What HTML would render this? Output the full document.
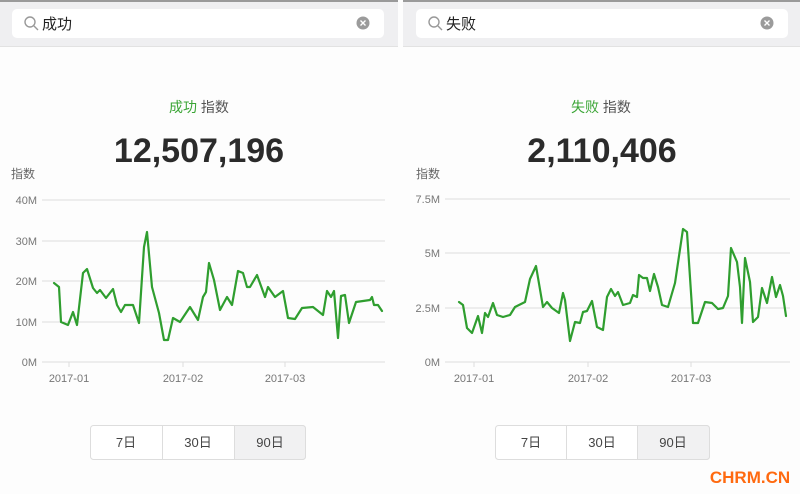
<!DOCTYPE html>
<html><head><meta charset="utf-8"><style>
html,body{margin:0;padding:0;background:#fff;width:800px;height:494px;overflow:hidden}
svg{display:block}
text{font-family:"Liberation Sans","Noto Sans CJK SC",sans-serif}
</style></head><body>
<svg width="800" height="494" viewBox="0 0 800 494">
<rect width="800" height="494" fill="#fdfdfd"/>
<!-- top bars -->
<rect x="0" y="0" width="398" height="46" fill="#efeff1"/>
<rect x="403" y="0" width="397" height="46" fill="#efeff1"/>
<rect x="0" y="0" width="398" height="2" fill="#9a9a9a"/>
<rect x="403" y="0" width="397" height="2" fill="#9a9a9a"/>
<rect x="0" y="46" width="398" height="1" fill="#e2e2e2"/>
<rect x="403" y="46" width="397" height="1" fill="#e2e2e2"/>
<rect x="12" y="9" width="372" height="29" rx="5" fill="#fff"/>
<rect x="416" y="9" width="372" height="29" rx="5" fill="#fff"/>
<g fill="none" stroke="#999" stroke-width="1.4"><circle cx="30" cy="22" r="5"/><line x1="34" y1="26" x2="38" y2="30"/>
<circle cx="434" cy="22" r="5"/><line x1="438" y1="26" x2="442" y2="30"/></g>
<text x="42" y="29" font-size="15" fill="#222">成功</text>
<text x="446" y="29" font-size="15" fill="#222">失败</text>
<circle cx="363" cy="23" r="6.5" fill="#9b9b9b"/><path d="M360.5 20.5l5 5M365.5 20.5l-5 5" stroke="#fff" stroke-width="1.4"/>
<circle cx="767" cy="23" r="6.5" fill="#9b9b9b"/><path d="M764.5 20.5l5 5M769.5 20.5l-5 5" stroke="#fff" stroke-width="1.4"/>
<!-- titles -->
<text x="199" y="112" font-size="14" text-anchor="middle"><tspan fill="#3aa535">成功</tspan><tspan fill="#555"> 指数</tspan></text>
<text x="601" y="112" font-size="14" text-anchor="middle"><tspan fill="#3aa535">失败</tspan><tspan fill="#555"> 指数</tspan></text>
<text x="199" y="162" font-size="34" font-weight="bold" fill="#2b2b2b" text-anchor="middle">12,507,196</text>
<text x="602" y="162" font-size="34" font-weight="bold" fill="#2b2b2b" text-anchor="middle">2,110,406</text>
<text x="11" y="178" font-size="12" fill="#666">指数</text>
<text x="416" y="178" font-size="12" fill="#666">指数</text>
<!-- grids -->
<g stroke="#ddd" stroke-width="1">
<line x1="42" y1="200" x2="385" y2="200"/><line x1="42" y1="241" x2="385" y2="241"/><line x1="42" y1="281" x2="385" y2="281"/><line x1="42" y1="322" x2="385" y2="322"/><line x1="42" y1="362" x2="385" y2="362"/>
<line x1="445" y1="199" x2="790" y2="199"/><line x1="445" y1="253" x2="790" y2="253"/><line x1="445" y1="308" x2="790" y2="308"/><line x1="445" y1="362" x2="790" y2="362"/>
<line x1="69" y1="362" x2="69" y2="367"/><line x1="183" y1="362" x2="183" y2="367"/><line x1="285" y1="362" x2="285" y2="367"/>
<line x1="474" y1="362" x2="474" y2="367"/><line x1="588" y1="362" x2="588" y2="367"/><line x1="691" y1="362" x2="691" y2="367"/>
</g>
<g font-size="11" fill="#777" text-anchor="end">
<text x="37" y="204">40M</text><text x="37" y="245">30M</text><text x="37" y="285">20M</text><text x="37" y="326">10M</text><text x="37" y="366">0M</text>
<text x="440" y="203">7.5M</text><text x="440" y="257">5M</text><text x="440" y="312">2.5M</text><text x="440" y="366">0M</text>
</g>
<g font-size="11" fill="#777" text-anchor="middle">
<text x="69" y="382">2017-01</text><text x="183" y="382">2017-02</text><text x="285" y="382">2017-03</text>
<text x="474" y="382">2017-01</text><text x="588" y="382">2017-02</text><text x="691" y="382">2017-03</text>
</g>
<g fill="none" stroke="#2f9e2f" stroke-width="2.2" stroke-linejoin="round" stroke-linecap="round">
<polyline points="54,283 59,287 61,322 68,325 73,312 77,325 83,273 87,269 93,288 97,293 100,290 106,298 113,289 117,305 121,312 125,305 133,305 139,323 144,247 147,232 152,287 159,313 164,340 168,340 173,318 180,322 190,307 198,320 203,297 206,292 209,263 214,280 220,310 227,297 232,305 238,271 243,273 247,287 250,287 257,275 265,297 268,287 275,297 283,291 288,318 295,319 302,308 313,307 323,315 327,291 331,297 334,291 338,338 341,296 345,295 349,323 356,302 370,300 372,297 374,305 378,305 382,311"/>
<polyline points="459,302 463,305 467,328 472,333 478,316 482,333 485,313 488,317 493,303 497,315 503,317 510,315 515,307 525,302 530,279 536,266 543,307 547,302 552,308 559,313 563,293 565,300 570,341 575,322 580,323 583,312 587,311 592,301 597,327 603,330 607,297 611,289 615,296 618,292 623,305 630,303 633,295 637,297 639,275 643,278 647,278 650,291 654,274 658,287 662,305 668,307 675,283 683,229 687,232 693,323 698,323 705,302 712,303 718,309 723,308 728,296 731,248 737,262 740,287 742,323 745,258 750,282 753,322 758,317 762,288 767,303 772,277 776,297 780,285 783,296 786,316"/>
</g>
<!-- buttons -->
<rect x="90.5" y="425.5" width="215" height="34" rx="3" fill="#fff" stroke="#ddd"/>
<path d="M234.5 425.5h68a3 3 0 0 1 3 3v28a3 3 0 0 1-3 3h-68z" fill="#f1f1f2" stroke="#ddd"/>
<line x1="162.5" y1="426" x2="162.5" y2="459" stroke="#ddd"/>
<rect x="495.5" y="425.5" width="214" height="34" rx="3" fill="#fff" stroke="#ddd"/>
<path d="M637.5 425.5h69a3 3 0 0 1 3 3v28a3 3 0 0 1-3 3h-69z" fill="#f1f1f2" stroke="#ddd"/>
<line x1="566.5" y1="426" x2="566.5" y2="459" stroke="#ddd"/>
<g font-size="13" fill="#444" text-anchor="middle">
<text x="126" y="447">7日</text><text x="198" y="447">30日</text><text x="270" y="447">90日</text>
<text x="531" y="447">7日</text><text x="602" y="447">30日</text><text x="673" y="447">90日</text>
</g>
<text x="750" y="483" font-size="17" font-weight="bold" fill="#ff6a10" text-anchor="middle">CHRM.CN</text>
</svg>
</body></html>
